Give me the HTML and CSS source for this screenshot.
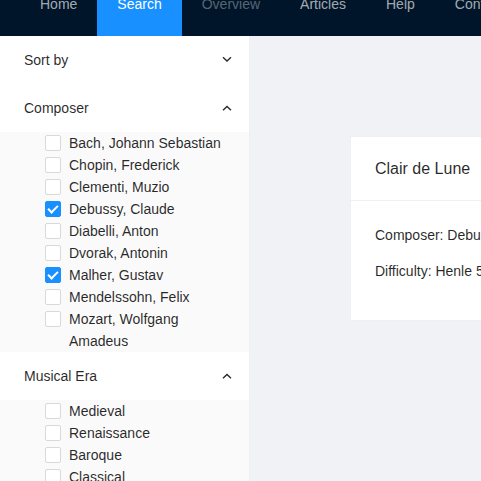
FILE: index.html
```html
<!DOCTYPE html>
<html lang="en">
<head>
<meta charset="utf-8">
<meta name="viewport" content="width=device-width, initial-scale=1">
<title>Search</title>
<link rel="stylesheet" href="styles.css">
</head>
<body>
<header class="header">
  <nav class="nav">
    <a class="nav-link" href="#home">Home</a>
    <a class="nav-link nav-link-active" href="#search" aria-current="page">Search</a>
    <a class="nav-link nav-link-disabled" aria-disabled="true">Overview</a>
    <a class="nav-link" href="#articles">Articles</a>
    <a class="nav-link" href="#help">Help</a>
    <a class="nav-link" href="#contact">Contact</a>
  </nav>
</header>
<div class="layout">
  <aside class="sider">
    <button class="group-title" type="button" aria-expanded="false">Sort by
      <svg class="chevron" viewBox="0 0 10 10" aria-hidden="true"><path d="M1 2.2l4 3.8 4-3.8"/></svg>
    </button>
    <button class="group-title" type="button" aria-expanded="true">Composer
      <svg class="chevron" viewBox="0 0 10 10" aria-hidden="true"><path d="M1 7.3l4-3.8 4 3.8"/></svg>
    </button>
    <div class="options">
      <label class="option"><input class="box" type="checkbox"><span>Bach, Johann Sebastian</span></label>
      <label class="option"><input class="box" type="checkbox"><span>Chopin, Frederick</span></label>
      <label class="option"><input class="box" type="checkbox"><span>Clementi, Muzio</span></label>
      <label class="option"><input class="box" type="checkbox" checked><span>Debussy, Claude</span></label>
      <label class="option"><input class="box" type="checkbox"><span>Diabelli, Anton</span></label>
      <label class="option"><input class="box" type="checkbox"><span>Dvorak, Antonin</span></label>
      <label class="option"><input class="box" type="checkbox" checked><span>Malher, Gustav</span></label>
      <label class="option"><input class="box" type="checkbox"><span>Mendelssohn, Felix</span></label>
      <label class="option"><input class="box" type="checkbox"><span>Mozart, Wolfgang Amadeus</span></label>
    </div>
    <button class="group-title" type="button" aria-expanded="true">Musical Era
      <svg class="chevron" viewBox="0 0 10 10" aria-hidden="true"><path d="M1 7.3l4-3.8 4 3.8"/></svg>
    </button>
    <div class="options">
      <label class="option"><input class="box" type="checkbox"><span>Medieval</span></label>
      <label class="option"><input class="box" type="checkbox"><span>Renaissance</span></label>
      <label class="option"><input class="box" type="checkbox"><span>Baroque</span></label>
      <label class="option"><input class="box" type="checkbox"><span>Classical</span></label>
    </div>
  </aside>
  <main class="content">
    <article class="card">
      <h2 class="card-title">Clair de Lune</h2>
      <div class="card-body">
        <p class="card-line">Composer: Debussy</p>
        <p class="card-line">Difficulty: Henle 5</p>
      </div>
    </article>
  </main>
</div>
</body>
</html>
```
FILE: styles.css
```css
*,
*::after {
  box-sizing: border-box;
}

body {
  display: flex;
  flex-direction: column;
  height: 100vh;
  margin: 0;
  overflow: hidden;
  background: #f0f2f5;
  color: rgba(0, 0, 0, 0.85);
  font-family: "Liberation Sans", Arial, sans-serif;
  font-size: 14px;
  line-height: 22px;
}

.header {
  flex: none;
  margin-top: -28px;
  padding: 0 20px;
  background: #001529;
}

.nav {
  display: flex;
}

.nav-link {
  flex: none;
  padding: 0 20px;
  color: rgba(255, 255, 255, 0.65);
  line-height: 64px;
  text-decoration: none;
}

.nav-link-active {
  background: #1890ff;
  color: #fff;
}

.nav-link-disabled {
  color: rgba(255, 255, 255, 0.35);
}

.layout {
  display: flex;
  flex: 1;
  min-height: 0;
}

.sider {
  flex: none;
  width: 250px;
  overflow: hidden;
  border-right: 1px solid #f0f0f0;
  background: #fff;
}

.group-title {
  display: flex;
  align-items: center;
  justify-content: space-between;
  width: 100%;
  height: 48px;
  padding: 0 17px 0 24px;
  border: 0;
  background: #fff;
  color: inherit;
  font: inherit;
  text-align: left;
  cursor: pointer;
}

.chevron {
  width: 10px;
  height: 10px;
  fill: none;
  stroke: currentColor;
  stroke-width: 1.3;
}

.options {
  padding: 0 24px 0 45px;
  background: #fafafa;
}

.option {
  display: flex;
  align-items: flex-start;
  gap: 8px;
}

.box {
  flex: none;
  width: 16px;
  height: 16px;
  margin: 3px 0 0;
  border: 1px solid #d9d9d9;
  border-radius: 2px;
  appearance: none;
  background: #fff;
}

.box:checked {
  display: grid;
  place-items: center;
  border-color: #1890ff;
  background: #1890ff;
}

.box:checked::after {
  width: 6px;
  height: 10px;
  margin-bottom: 2px;
  border: solid #fff;
  border-width: 0 2px 2px 0;
  content: "";
  transform: rotate(45deg);
}

.content {
  flex: 1;
  min-width: 0;
  padding: 100px;
}

.card {
  min-width: 300px;
  border: 1px solid #f0f0f0;
  background: #fff;
}

.card-title {
  margin: 0 0 -1px;
  padding: 20px 24px;
  border-bottom: 1px solid #f0f0f0;
  font-size: 16px;
  font-weight: 400;
  line-height: 23px;
}

.card-body {
  padding: 24px;
}

.card-line {
  margin: 0 0 14px;
}
```
